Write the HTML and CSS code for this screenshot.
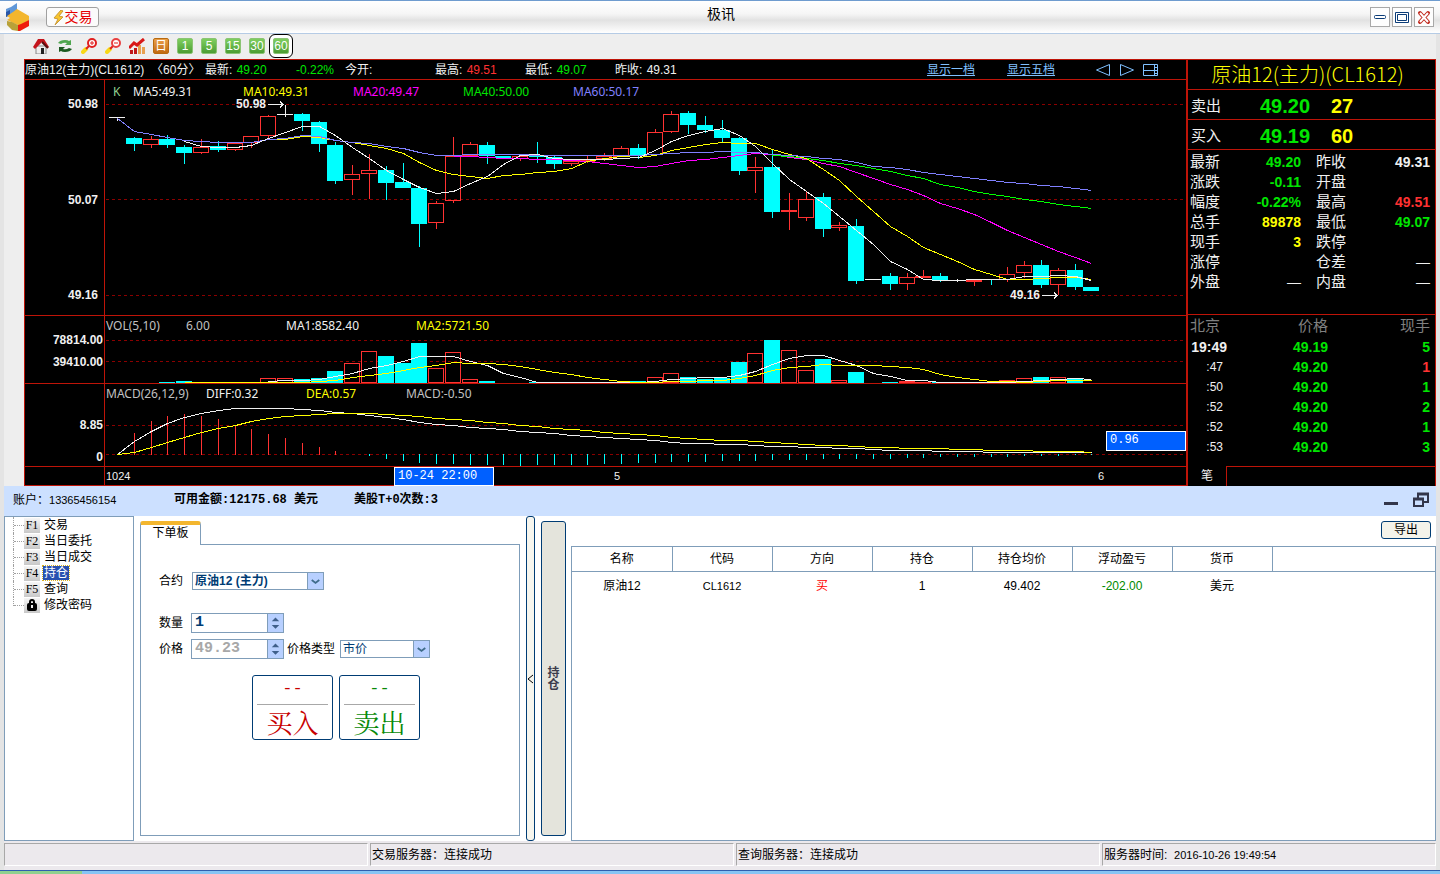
FILE: index.html
```html
<!DOCTYPE html>
<html lang="zh-CN">
<head>
<meta charset="utf-8">
<title>极讯</title>
<link rel="stylesheet" href="styles.css">
</head>
<body>

<header class="titlebar">
<svg class="logo" width="26" height="28" viewBox="0 0 26 28">
<path d="M1 6l5-2 6-4v8l-4 3-7 3z" fill="#5f97d8"/>
<path d="M1 9l4-2v5l-4 2z" fill="#2956a8"/>
<path d="M2 13l6-4 4-3 12 7v4l-9 6-13-6 3-2z" fill="#f3b62e"/>
<path d="M2 18l5 1 6 3v6l-6-1-5-5z" fill="#b8a138"/>
<path d="M13 22l3-1 8-4v6l-9 5h-2z" fill="#ee1b0c"/>
</svg>
<button class="trade-btn"><svg width="12" height="15" viewBox="0 0 12 15"><path d="M8 0L1 8l4 1-3 6 8-8-4-1 4-5z" fill="#f8c52c" stroke="#c99a3a"/></svg>交易</button>
<h1 class="caption">极讯</h1>
<div class="win-btns">
<button aria-label="最小化"><svg width="16" height="16" viewBox="0 0 16 16"><rect x="2.500" y="6.500" width="11" height="3" rx="1" fill="#fff" stroke="#0b3c78"/></svg></button>
<button aria-label="最大化"><svg width="16" height="16" viewBox="0 0 16 16"><path d="M1.500 3.500h13v10h-13zM3.500 5.500h9v6h-9z" fill="#fff" stroke="#0b3c78"/></svg></button>
<button aria-label="关闭"><svg width="16" height="16" viewBox="0 0 16 16"><path d="M4 4l8 9M12 4l-8 9" stroke="#c0281c" stroke-width="4" stroke-linecap="round"/><path d="M4 4l8 9M12 4l-8 9" stroke="#fff" stroke-width="2"/></svg></button>
</div>
</header>

<main class="frame">
<nav class="toolbar">
<button aria-label="首页"><svg width="16" height="16" viewBox="0 0 16 16"><path d="M3 8h10v8H3z" fill="#eee" stroke="#888"/><path d="M8 10h3v6H8z" fill="#222"/><path d="M0 9l5-8h6l5 8-2 1-5-6-7 7z" fill="#c4141c"/><path d="M9 4l6 6" stroke="#5a0c0c" stroke-width="2"/></svg></button>
<button aria-label="刷新"><svg width="16" height="16" viewBox="0 0 16 16"><path d="M1 5q2-3 7-3 3 0 4 1l2-1v5H8l2-2q-3-1-6 1z" fill="#4fa64f"/><path d="M15 11q-2 3-7 3-3 0-4-1l-2 1V9h6l-2 2q3 1 6-1z" fill="#1c5a20"/></svg></button>
<button aria-label="放大"><svg width="16" height="16" viewBox="0 0 16 16"><path d="M2 14l3-3" stroke="#f8d818" stroke-width="4" stroke-linecap="round"/><path d="M5 11l3-3" stroke="#e02020" stroke-width="2"/><circle cx="11" cy="5" r="4" fill="#fff" stroke="#e02020" stroke-width="2"/><path d="M9 5h4M11 3v4" stroke="#e02020"/></svg></button>
<button aria-label="缩小"><svg width="16" height="16" viewBox="0 0 16 16"><path d="M2 14l3-3" stroke="#f8d818" stroke-width="4" stroke-linecap="round"/><path d="M5 11l3-3" stroke="#e02020" stroke-width="2"/><circle cx="11" cy="5" r="4" fill="#fff" stroke="#e84040" stroke-width="2"/><path d="M9 5h4" stroke="#e02020"/></svg></button>
<button aria-label="指标"><svg width="16" height="16" viewBox="0 0 16 16"><path d="M1 16V12h3v4zM5 16v-6h3v6z" fill="#c01818"/><path d="M9 16V7h3v9zM13 16v-7h3v7z" fill="#e8a050"/><path d="M0 10l5-5 3 2 7-6" fill="none" stroke="#d81818" stroke-width="3"/></svg></button>
<button class="period day">日</button>
<button class="period">1</button>
<button class="period">5</button>
<button class="period">15</button>
<button class="period">30</button>
<button class="period active">60</button>
</nav>

<section class="market">
<div class="chart">
<div class="chart-head">
<span class="h-name">原油12(主力)(CL1612) &nbsp;〈60分〉</span>
<span class="h-item">最新: <b class="up">49.20</b></span>
<span class="h-pct"><b class="up">-0.22%</b></span>
<span class="h-item">今开:</span>
<span class="h-item">最高: <b class="down">49.51</b></span>
<span class="h-item">最低: <b class="up">49.07</b></span>
<span class="h-item">昨收: <b>49.31</b></span>
<span class="h-links"><a href="#">显示一档</a><a href="#">显示五档</a></span>
<span class="h-icons">
<svg width="16" height="16" viewBox="0 0 16 16"><path d="M14.500 2.500v11L1.500 8z"/></svg>
<svg width="16" height="16" viewBox="0 0 16 16"><path d="M1.500 2.500v11L14.500 8z"/></svg>
<svg width="16" height="16" viewBox="0 0 16 16"><path d="M.5 2.500h14v11H.5zM11.500 2.500v11M.5 8.500h14M11.500 5.500h3M11.500 11.500h3"/></svg>
</span>
</div>

<div class="pane price">
<div class="scale"><span>50.98</span><span>50.07</span><span>49.16</span></div>
<div class="plot">
<svg id="price-plot"></svg>
<div class="legend ma"><span class="k">K</span><span>MA5:49.31</span><span class="yellow">MA10:49.31</span><span class="magenta">MA20:49.47</span><span class="green">MA40:50.00</span><span class="violet">MA60:50.17</span></div>
</div>
</div>

<div class="pane volume">
<div class="scale"><span>78814.00</span><span>39410.00</span></div>
<div class="plot">
<svg id="volume-plot"></svg>
<div class="legend vol"><span class="grey">VOL(5,10)</span><span class="grey">6.00</span><span>MA1:8582.40</span><span class="yellow">MA2:5721.50</span></div>
</div>
</div>

<div class="pane macd">
<div class="scale"><span>8.85</span><span>0</span></div>
<div class="plot">
<svg id="macd-plot"></svg>
<div class="legend osc"><span class="grey">MACD(26,12,9)</span><span>DIFF:0.32</span><span class="yellow">DEA:0.57</span><span class="grey">MACD:-0.50</span></div>
<output class="mark mark-value">0.96</output>
</div>
</div>

<div class="pane dates">
<div class="scale"></div>
<div class="plot">
<svg><text x="1" y="13">1024</text><text x="509" y="13">5</text><text x="993" y="13">6</text></svg>
<output class="mark mark-time">10-24 22:00</output>
</div>
</div>
</div>

<aside class="quote">
<h2>原油12(主力)(CL1612)</h2>
<div class="level"><span>卖出</span><b class="up">49.20</b><b class="yellow">27</b></div>
<div class="level"><span>买入</span><b class="up">49.19</b><b class="yellow">60</b></div>
<table class="stats">
<tr><th>最新</th><td class="up">49.20</td><th>昨收</th><td>49.31</td></tr>
<tr><th>涨跌</th><td class="up">-0.11</td><th>开盘</th><td></td></tr>
<tr><th>幅度</th><td class="up">-0.22%</td><th>最高</th><td class="down">49.51</td></tr>
<tr><th>总手</th><td class="yellow">89878</td><th>最低</th><td class="up">49.07</td></tr>
<tr><th>现手</th><td class="yellow">3</td><th>跌停</th><td></td></tr>
<tr><th>涨停</th><td></td><th>仓差</th><td class="none">—</td></tr>
<tr><th>外盘</th><td class="none">—</td><th>内盘</th><td class="none">—</td></tr>
</table>
<table class="ticks">
<tr><th>北京</th><th>价格</th><th>现手</th></tr>
<tr><td class="full">19:49</td><td class="up">49.19</td><td class="up">5</td></tr>
<tr><td>:47</td><td class="up">49.20</td><td class="down">1</td></tr>
<tr><td>:50</td><td class="up">49.20</td><td class="up">1</td></tr>
<tr><td>:52</td><td class="up">49.20</td><td class="up">2</td></tr>
<tr><td>:52</td><td class="up">49.20</td><td class="up">1</td></tr>
<tr><td>:53</td><td class="up">49.20</td><td class="up">3</td></tr>
</table>
<div class="quote-tabs"><button>笔</button><i></i></div>
</aside>
</section>

<section class="account">
<span class="acc-id">账户：<small>13365456154</small></span>
<b class="acc-cash">可用金额:12175.68 美元</b>
<b>美股T+0次数:3</b>
<span class="acc-btns">
<button aria-label="收起"><svg width="18" height="18" viewBox="0 0 18 18"><path d="M2 11h14v3H2z" fill="#33364a"/></svg></button>
<button aria-label="还原"><svg width="18" height="18" viewBox="0 0 18 18"><path d="M6 7V3h10v8h-4M2 8h9v7H2z" fill="none" stroke="#33364a" stroke-width="2"/><path d="M1 8h11M5 3h12" stroke="#33364a" stroke-width="3"/></svg></button>
</span>
</section>

<section class="desk">
<ul class="tree">
<li><a href="#"><i>F1</i><span>交易</span></a></li>
<li><a href="#"><i>F2</i><span>当日委托</span></a></li>
<li><a href="#"><i>F3</i><span>当日成交</span></a></li>
<li><a href="#" class="current"><i>F4</i><span>持仓</span></a></li>
<li><a href="#"><i>F5</i><span>查询</span></a></li>
<li><a href="#"><i><svg width="10" height="12" viewBox="0 0 10 12"><path d="M3 5V3q0-2 2-2t2 2v2" fill="none" stroke="#000" stroke-width="2"/><rect y="4" width="10" height="8" rx="2"/><path d="M4 6h2v3H4z" fill="#eee"/></svg></i><span>修改密码</span></a></li>
</ul>

<div class="order">
<button class="order-tab">下单板</button>
<form class="order-form">
<div class="row row-contract">
<label for="contract">合约</label>
<span class="select contract"><select id="contract"><option>原油12 (主力)</option></select><svg width="16" height="16" viewBox="0 0 16 16"><path d="M4 7l4 3 4-3" fill="none" stroke="#3f6c8a" stroke-width="2"/></svg></span>
</div>
<div class="row row-qty">
<label for="qty">数量</label>
<span class="spin"><input id="qty" type="text" value="1"><svg width="16" height="18" viewBox="0 0 16 18"><path d="M4 7l4-4 4 4zM4 11l4 4 4-4z" fill="#3f5f8a"/></svg></span>
</div>
<div class="row row-price">
<label for="price">价格</label>
<span class="spin"><input id="price" type="text" value="49.23" disabled><svg width="16" height="18" viewBox="0 0 16 18"><path d="M4 7l4-4 4 4zM4 11l4 4 4-4z" fill="#3f5f8a"/></svg></span>
<label for="ptype" class="ptype">价格类型</label>
<span class="select kind"><select id="ptype"><option>市价</option></select><svg width="16" height="16" viewBox="0 0 16 16"><path d="M4 7l4 3 4-3" fill="none" stroke="#3f6c8a" stroke-width="2"/></svg></span>
</div>
<div class="deal">
<button type="button" class="buy"><em>--</em>买入</button>
<button type="button" class="sell"><em>--</em>卖出</button>
</div>
</form>
</div>

<button class="splitter" aria-label="折叠"><svg width="7" height="10" viewBox="0 0 7 10"><path d="M6 1L1 5l5 4" fill="none" stroke="#000"/></svg></button>
<button class="side-tab">持仓</button>

<div class="holdings">
<div class="holdings-bar"><button>导出</button></div>
<div class="grid">
<table>
<thead>
<tr><th>名称</th><th>代码</th><th>方向</th><th>持仓</th><th>持仓均价</th><th>浮动盈亏</th><th>货币</th><th class="rest"></th></tr>
</thead>
<tbody>
<tr><td>原油12</td><td class="code">CL1612</td><td class="long">买</td><td>1</td><td>49.402</td><td class="loss">-202.00</td><td>美元</td><td></td></tr>
</tbody>
</table>
</div>
</div>
</section>

<footer class="status">
<span></span>
<span>交易服务器：连接成功</span>
<span>查询服务器：连接成功</span>
<span>服务器时间: &nbsp;<small>2016-10-26 19:49:54</small></span>
</footer>
</main>
<div class="taskbar"><i></i></div>

<script src="chart.js"></script>
</body>
</html>
```
FILE: styles.css
```css
/* Trading terminal */

*
{ box-sizing: border-box;
}

body
{ margin: 0;
min-height: 100vh;
display: flex;
flex-direction: column;
background: #e4e4e4;
color: #000;
font: 12px/16px "Liberation Sans", "Noto Sans CJK SC", sans-serif;
}

button, input, select
{ font: inherit;
color: inherit;
margin: 0;
padding: 0;
}

button
{ border: 0;
background: none;
}

h1, h2, ul
{ margin: 0;
padding: 0;
font-weight: normal;
}

i, em
{ font-style: normal;
}

small
{ font-size: 11px;
}

svg
{ display: block;
}

table
{ border-collapse: collapse;
table-layout: fixed;
width: 100%;
}

th, td
{ padding: 0;
font-weight: normal;
}

.up, .green { color: #00e600; }
.down { color: #ff3232; }
.yellow { color: #ffff00; }
.magenta { color: #ff00ff; }
.violet { color: #8080ff; }
.grey { color: #c0c0c0; }

/* Title bar */

.titlebar
{ display: grid;
grid-template-columns: 1fr auto 1fr;
grid-template-rows: 32px;
align-items: center;
border-top: 1px solid #6f9ccf;
border-bottom: 1px solid #b5cbe5;
background: linear-gradient(#fff, #f6f6f6 40%, #e2e2e2 60%, #fff);
}

.logo
{ grid-area: 1 / 1;
margin-left: 5px;
}

.trade-btn
{ grid-area: 1 / 1;
display: flex;
align-items: center;
justify-content: center;
justify-self: start;
width: 53px;
height: 20px;
margin-left: 46px;
border: 1px solid #a0a0a0;
border-radius: 3px;
background: #fbfbfb;
color: #e60000;
font-size: 14px;
}

.caption
{ grid-area: 1 / 2;
font-size: 14px;
line-height: 20px;
padding: 0 0 6px 2px;
}

.win-btns
{ grid-area: 1 / 3;
display: flex;
justify-content: flex-end;
gap: 2px;
padding-right: 6px;
}

.win-btns button
{ width: 20px;
height: 20px;
padding: 1px;
border: 1px solid #a8a8a8;
background: #fdfdfd;
}

.frame
{ flex: 1;
display: flex;
flex-direction: column;
margin: 0 4px;
background: #eee;
}

/* Toolbar */

.toolbar
{ display: flex;
align-items: center;
gap: 8px;
height: 25px;
padding: 0 0 2px 29px;
}

.period
{ width: 16px;
height: 16px;
border-radius: 2px;
background: linear-gradient(#7fcf5f, #4c9d33);
border: 1px solid #8bc474;
color: #fff;
font-size: 12px;
line-height: 14px;
}

.period.day
{ background: linear-gradient(#eaa04a, #c26a10);
border-color: #b86a10;
}

.period.active
{ outline: 1px solid #000;
outline-offset: 3px;
box-shadow: 0 0 0 3px #fff;
}

/* Chart */

.market
{ display: flex;
margin-left: 20px;
background: #000;
color: #f0f0f0;
}

.chart
{ flex: 1;
min-width: 0;
border: 1px solid #be1408;
border-width: 1px 0 1px 1px;
}

.chart-head
{ display: flex;
align-items: center;
height: 20px;
border-bottom: 1px solid #be1408;
white-space: nowrap;
}

.chart-head b
{ font-weight: normal;
margin-left: 1px;
}

.h-name { width: 180px; }
.h-item { width: 90px; }
.h-pct { width: 50px; }

.h-links
{ display: flex;
gap: 32px;
margin-left: auto;
}

.h-links a
{ color: #80c0ff;
}

.h-icons
{ display: flex;
gap: 8px;
margin: 0 27px 0 40px;
}

.h-icons svg
{ fill: none;
stroke: #80c0ff;
}

.pane
{ display: flex;
}

.pane + .pane
{ border-top: 1px solid #be1408;
}

.price { height: 235px; }
.volume { height: 68px; }
.macd { height: 83px; }
.dates { height: 19px; }

.scale
{ display: flex;
flex-direction: column;
justify-content: space-between;
width: 79px;
text-align: right;
font-weight: bold;
}

.price .scale { padding: 16px 6px 12px 0; }
.volume .scale { padding: 16px 1px 13px 0; }
.macd .scale { padding: 33px 1px 1px 0; }

.plot
{ position: relative;
flex: 1;
min-width: 0;
border-left: 1px solid #be1408;
}

.plot svg
{ width: 100%;
height: 100%;
shape-rendering: crispEdges;
overflow: hidden;
}

.plot text
{ fill: #f0f0f0;
font-size: 11px;
}

.plot text.peak
{ font-size: 12px;
font-weight: bold;
}

.legend
{ position: absolute;
top: 4px;
left: 1px;
display: grid;
font-family: "Noto Sans", sans-serif;
white-space: nowrap;
}

.legend.ma { grid-template-columns: 20px repeat(5, 110px); padding-left: 7px; }
.legend.vol { grid-template-columns: 80px 100px 130px 100px; top: 2px; }
.legend.osc { grid-template-columns: repeat(4, 100px); top: 2px; }
.legend .k { color: #90d090; }

.mark
{ position: absolute;
border: 1px solid #fff;
background: #0060ff;
padding-left: 3px;
color: #fff;
font: 12px/16px "Liberation Mono", monospace;
}

.mark-value
{ right: 0;
bottom: 15px;
width: 80px;
height: 20px;
}

.mark-time
{ left: 289px;
top: 0;
width: 100px;
height: 19px;
}

/* Quote panel */

.quote
{ display: flex;
flex-direction: column;
width: 250px;
border: 1px solid #be1408;
border-width: 1px 1px 0 2px;
}

.quote h2
{ border-bottom: 1px solid #be1408;
height: 30px;
padding-right: 8px;
color: #ffff00;
font: 300 20px/28px "Noto Sans CJK SC", sans-serif;
text-align: center;
}

.level
{ display: grid;
grid-template-columns: 69px 71px auto;
align-items: center;
height: 30px;
padding: 2px 0 0 3px;
border-bottom: 1px solid #be1408;
font-size: 20px;
line-height: 26px;
}

.level span
{ font-size: 15px;
}

.stats
{ margin-top: 2px;
margin-bottom: 22px;
line-height: 20px;
}

.stats tr
{ height: 20px;
}

.stats th
{ width: 45px;
padding-left: 2px;
text-align: left;
font-size: 15px;
}

.stats td
{ width: 68px;
text-align: right;
font-size: 14px;
font-weight: bold;
}

.stats td + th
{ padding-left: 15px;
}

.stats th:nth-child(3)
{ width: 60px;
}

.stats td:last-child
{ width: auto;
padding-right: 5px;
}

.stats td.none
{ font-weight: normal;
}

.ticks
{ border-top: 1px solid #be1408;
line-height: 20px;
text-align: right;
}

.ticks tr { height: 20px; }

.ticks th
{ color: #808080;
font-size: 15px;
line-height: 22px;
}

.ticks th:first-child
{ width: 39px;
text-align: left;
padding-left: 2px;
}

.ticks th:nth-child(2) { width: 101px; }

.ticks td
{ font-size: 14px;
font-weight: bold;
}

.ticks td:first-child
{ padding-right: 4px;
font-size: 12px;
font-weight: normal;
}

.ticks td.full:first-child
{ padding-right: 0;
font-size: 14px;
font-weight: bold;
}

.ticks tr > :last-child { padding-right: 5px; }

.quote-tabs
{ display: flex;
height: 20px;
margin-top: auto;
}

.quote-tabs button
{ width: 38px;
}

.quote-tabs i
{ flex: 1;
border: 1px solid #be1408;
border-width: 1px 0 0 1px;
}

/* Account line */

.account
{ display: flex;
align-items: center;
height: 30px;
padding: 0 6px 2px 9px;
background: #cce0ff;
}

.account b
{ font-family: "Liberation Mono", "Noto Sans CJK SC", monospace;
}

.acc-id
{ width: 161px;
}

.acc-cash
{ width: 180px;
}

.acc-btns
{ display: flex;
gap: 12px;
margin-left: auto;
}

/* Lower work area */

.desk
{ flex: 1;
display: flex;
min-height: 325px;
background: #fff;
}

.tree
{ width: 130px;
border: 1px solid #7f9db9;
list-style: none;
}

.tree li
{ height: 16px;
margin-left: 8px;
border-left: 1px dotted #a0a0a0;
}

.tree li:last-child
{ height: 9px;
}

.tree a
{ display: flex;
align-items: center;
height: 16px;
color: #000;
text-decoration: none;
}

.tree a::before
{ content: "";
width: 10px;
border-top: 1px dotted #a0a0a0;
}

.tree i
{ display: flex;
align-items: center;
justify-content: center;
width: 16px;
height: 15px;
background: linear-gradient(#f6f6f6, #c8c8c8);
font: 12px/15px "Liberation Serif", serif;
}

.tree span
{ padding: 0 1px;
margin-left: 3px;
line-height: 14px;
}

.tree .current span
{ background: #2850b0;
color: #fff;
outline: 1px dotted #d8b020;
}

.order
{ display: flex;
flex-direction: column;
flex: 0 0 380px;
margin: 5px 6px;
}

.order-tab
{ position: relative;
z-index: 1;
width: 61px;
height: 24px;
margin-bottom: -1px;
padding-bottom: 4px;
border: 1px solid #7f9db9;
border-width: 4px 1px 0;
border-top-color: #f3b62e;
border-radius: 3px 3px 0 0;
background: #fff;
}

.order-form
{ flex: 1;
border: 1px solid #7f9db9;
padding: 26px 18px;
}

.row
{ display: flex;
align-items: center;
height: 20px;
}

.row label
{ width: 32px;
}

.row label.ptype
{ width: 56px;
padding-left: 3px;
}

.row-qty { margin-top: 22px; }
.row-price { margin-top: 6px; }

.select, .spin
{ display: flex;
border: 1px solid #7f9db9;
color: #003c74;
background: #fff;
}

.select svg, .spin svg
{ flex: none;
background: #b8d0ff;
border-left: 1px solid #7f9db9;
pointer-events: none;
}

.select select
{ flex: 1;
min-width: 0;
height: 16px;
padding-left: 2px;
border: 0;
background: none;
appearance: none;
}

.select
{ height: 18px;
}

.contract { width: 132px; margin-left: 1px; font-weight: bold; }
.kind { width: 90px; }

.spin
{ width: 93px;
height: 20px;
font-size: 15px;
font-weight: bold;
}

.spin input
{ flex: 1;
min-width: 0;
border: 0;
padding-left: 3px;
background: none;
font-family: "Liberation Mono", monospace;
}

.spin input:disabled
{ color: #a8a8a8;
}

.deal
{ display: flex;
gap: 6px;
margin: 16px 0 0 93px;
}

.deal button
{ width: 81px;
height: 65px;
padding: 0 4px;
border: 1px solid #003c74;
border-radius: 3px;
font: 26px/34px "Noto Serif CJK SC", "Noto Sans CJK SC", serif;
}

.deal em
{ display: block;
height: 29px;
border-bottom: 1px solid #a8a8a8;
font: 17px/26px "Liberation Mono", monospace;
}

.deal .buy { color: #c80000; }
.deal .sell { color: #078a07; }

.splitter
{ display: flex;
align-items: center;
justify-content: center;
width: 9px;
border: 1px solid #003c74;
border-radius: 3px;
background: #f7f6ee;
}

.side-tab
{ width: 25px;
margin: 5px 5px 5px 6px;
padding: 0 5px;
border: 1px solid #003c74;
border-radius: 3px;
background: #e4e4dc;
color: #3c3c4c;
font-weight: bold;
line-height: 12px;
}

.holdings
{ flex: 1;
display: flex;
flex-direction: column;
}

.holdings-bar
{ height: 30px;
padding: 5px 5px 0 0;
text-align: right;
}

.holdings-bar button
{ width: 50px;
height: 18px;
border: 1px solid #003c74;
border-radius: 3px;
background: #f4f3ea;
}

.grid
{ flex: 1;
border: 1px solid #7f9db9;
}

.grid th
{ width: 100px;
height: 24px;
border-right: 1px solid #7f9db9;
border-bottom: 1px solid #7f9db9;
}

.grid th.rest
{ width: auto;
border-right: 0;
}

.grid td
{ height: 29px;
text-align: center;
}

.grid .code { font-size: 11px; }
.grid .long { color: #ff0000; }
.grid .loss { color: #008a00; }

.status
{ display: flex;
gap: 2px;
padding: 2px 0 4px;
background: #ece9ed;
}

.status span
{ flex: 12;
height: 23px;
border: 1px solid #a8a8a8;
border-right-color: #fff;
border-bottom-color: #fff;
padding-left: 1px;
line-height: 22px;
}

.status span:last-child
{ flex: 11;
}

.taskbar
{ height: 4px;
border-top: 1px solid #2f5fae;
background: #86c4f4;
}

.taskbar i
{ display: block;
width: 82px;
height: 3px;
background: #8fd08f;
}
```
FILE: chart.js
```javascript
// Draws the three panes. All y values are in window space, the group of
// each pane is shifted so that they fall in the right place.
var NS = "http://www.w3.org/2000/svg";
var RED = "#ff3232", CYAN = "#00ffff", WHITE = "#f0f0f0", YELLOW = "#ffff00";

function xAt(i) { return Math.round(117 + 16.8 * i); }

function add(parent, name, attrs, text) {
  var el = document.createElementNS(NS, name);
  for (var k in attrs) el.setAttribute(k, attrs[k]);
  if (text) el.textContent = text;
  parent.appendChild(el);
  return el;
}

function pane(id, top, grid) {
  var svg = document.getElementById(id);
  grid.forEach(function (y) {
    add(svg, "line", { x1: 1, x2: "100%", y1: y - top + 0.5, y2: y - top + 0.5,
      stroke: "#8b0000", "stroke-dasharray": "3 3" });
  });
  return add(svg, "g", { transform: "translate(-105," + -top + ")" });
}

function bar(g, i, top, bottom, up) {
  var x = xAt(i) - 8;
  if (up)
    add(g, "rect", { x: x + 0.5, y: top + 0.5, width: 15, height: Math.max(bottom - top, 1),
      fill: "none", stroke: RED });
  else
    add(g, "rect", { x: x, y: top, width: 16, height: Math.max(bottom - top, 1), fill: CYAN });
}

function wick(g, i, y1, y2, color) {
  if (y2 > y1) add(g, "rect", { x: xAt(i), y: y1, width: 1, height: y2 - y1, fill: color });
}

function curve(g, start, ys, color) {
  var pts = ys.map(function (y, n) { return (xAt(start + n) + 0.5) + "," + (y + 0.5); });
  add(g, "polyline", { points: pts.join(" "), fill: "none", stroke: color });
}

// kind, high, body top, body bottom, low
var candles = [
  ["w",117,117,118,121],["d",137,138,144,151],["u",136,139,144,148],["d",135,139,145,148],
  ["d",145,147,153,164],["u",139,147,152,154],["d",141,146,150,152],["u",143,143,149,151],
  ["u",136,136,142,148],["u",115,116,135,138],["w",105,114,115,117],["d",113,114,121,131],
  ["d",121,122,144,152],["d",142,145,181,184],["u",165,174,179,195],["u",154,170,173,199],
  ["d",166,170,183,200],["d",163,182,188,188],["d",186,188,224,247],["u",201,203,222,229],
  ["u",137,156,200,203],["u",142,144,155,156],["d",142,145,156,164],["d",156,156,158,158],
  ["u",154,156,158,161],["d",142,155,157,163],["d",156,157,164,169],["u",160,161,163,166],
  ["u",155,160,161,163],["u",153,156,158,161],["u",146,148,156,157],["d",144,148,156,159],
  ["u",129,132,154,154],["u",111,114,131,133],["d",111,113,125,134],["d",116,125,130,133],
  ["d",120,130,138,142],["d",137,138,171,175],["u",157,167,170,193],["d",149,167,212,218],
  ["u",193,210,211,230],["u",192,199,217,221],["d",193,197,229,237],["u",222,225,227,231],
  ["d",219,226,281,284],["w",279,279,280,280],["d",273,276,284,290],["u",273,277,283,290],
  ["u",270,276,277,278],["d",273,276,281,282],["w",279,280,281,282],["u",279,280,281,286],
  ["d",279,279,280,285],["u",267,274,279,282],["u",261,265,272,278],["d",260,265,285,288],
  ["u",268,270,284,295],["d",264,270,287,290],["d",287,287,291,291]
];

var p = pane("price-plot", 80, [104, 199, 295]);
candles.forEach(function (c, i) {
  if (c[0] == "u") {
    wick(p, i, c[1], c[2], RED);
    wick(p, i, c[3], c[4], RED);
    bar(p, i, c[2], c[3], true);
  } else if (c[0] == "d") {
    wick(p, i, c[1], c[4], CYAN);
    bar(p, i, c[2], c[3], false);
  } else {
    wick(p, i, c[1], c[4], WHITE);
    add(p, "rect", { x: xAt(i) - 8, y: c[2], width: 16, height: 1, fill: WHITE });
  }
});
curve(p, 20, [156,156,157,158,158,159,159,160,161,163,165,167,166,163,160,159,157,155,153,154,
  157,159,163,166,172,178,184,189,195,203,208,214,222,230,237,244,251,257,263], "#ff00ff");
curve(p, 39, [155,156,158,160,163,165,168,171,175,178,184,187,191,194,196,199,201,204,206,208], "#00ff00");
curve(p, 9, [139,139,136,137,140,142,145,148,153,162,170,174,176,178,175,174,172,171,168,161,
  158,156,157,155,150,147,144,142,143,143,149,154,158,169,180,196,211,226,236,247,254,261,
  269,274,279,279,278,277,277,279], YELLOW);
curve(p, 0, [118,131,134,137,140,141,142,142,142,139,138,135,136,140,142,143,146,148,152,155,
  155,154,154,154,154,155,155,155,155,155,155,155,154,153,152,152,151,152,152,154,155,156,
  158,159,162,166,167,169,172,174,176,178,180,182,183,185,186,188,190], "#8080ff");
curve(p, 4, [141,146,147,147,145,138,132,126,126,135,147,158,170,179,187,193,191,183,176,164,
  155,154,158,159,159,159,158,157,150,141,135,131,128,135,146,163,179,191,203,216,230,244,
  261,269,279,280,280,279,279,279,276,276,275,276,280], WHITE);

add(p, "text", { x: 236, y: 108, "class": "peak" }, "50.98");
add(p, "path", { d: "M268 104.500h15M280 101.500l3 3-3 3", fill: "none", stroke: WHITE });
add(p, "text", { x: 1010, y: 299, "class": "peak" }, "49.16");
add(p, "path", { d: "M1042 295.500h15M1054 292.500l3 3-3 3", fill: "none", stroke: WHITE });

// bar index, kind, top
var v = pane("volume-plot", 316, [340, 361]);
[[3,"d",382],[4,"d",381],[9,"u",378],[10,"u",378],[11,"d",379],[12,"d",378],[13,"d",371],
 [14,"u",363],[15,"u",351],[16,"d",356],[17,"d",363],[18,"d",343],[19,"u",368],[20,"u",352],
 [21,"u",379],[22,"d",381],[25,"d",382],[27,"u",382],[31,"d",381],[32,"u",377],[33,"u",373],
 [34,"d",377],[35,"d",379],[36,"d",378],[37,"d",362],[38,"u",353],[39,"d",340],[40,"u",350],
 [41,"u",370],[42,"d",359],[43,"u",380],[44,"d",372],[46,"d",382],[47,"u",381],[48,"u",382],
 [49,"d",382],[53,"u",380],[54,"u",378],[55,"d",377],[56,"u",377],[57,"d",379]
].forEach(function (b) {
  bar(v, b[0], b[2], b[1] == "u" ? 382 : 383, b[1] == "u");
});
curve(v, 9, [381,380,380,379,376,373,368,365,361,356,356,356,361,365,373,377,382,382,382,382,
  382,382,382,381,379,378,377,377,375,371,364,358,355,355,360,365,373,376,380,380,382,382,
  382,382,382,381,380,379,378,379], WHITE);
curve(v, 4, [382,382,382,382,382,382,382,382,381,380,377,375,373,370,367,365,362,363,363,364,
  366,369,372,374,377,379,381,382,382,381,381,380,380,378,375,370,367,366,364,365,365,365,
  366,367,369,374,377,379,381,381,382,381,380,380,380], YELLOW);

var m = pane("macd-plot", 384, [425, 454]);
[433,421,416,414,416,419,425,429,434,438,443,447,451].forEach(function (y, n) {
  wick(m, n + 1, y, 455, RED);
});
[456,459,461,463,464,464,465,465,465,466,465,465,465,465,464,464,463,463,462,462,462,461,461,
 461,460,460,460,459,459,459,459,459,458,458,457,457,457,457,457,456,456,456,455,455
].forEach(function (y, n) {
  wick(m, n + 15, 454, y, CYAN);
});
curve(m, 0, [454,441,431,423,417,413,410,408,408,408,408,409,410,412,413,415,417,419,422,424,
  425,427,428,429,431,432,433,435,436,437,438,439,440,442,443,443,444,444,445,446,446,447,
  447,448,448,449,450,450,450,451,451,451,452,452,452,452,452,452,452], WHITE);
curve(m, 0, [454,452,447,442,437,432,428,425,421,418,416,415,414,413,413,413,414,415,416,418,
  419,420,422,423,425,426,428,429,430,432,433,434,435,437,438,439,440,440,441,442,443,444,
  445,445,446,447,447,448,448,448,449,449,450,450,450,451,451,451,452], YELLOW);
```
